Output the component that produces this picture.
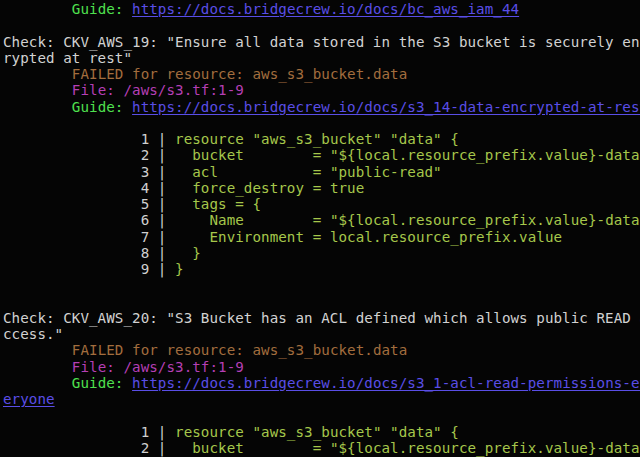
import { ReactNode } from 'react';

// 终端输出：checkov 扫描结果
const CODE = [
  'resource "aws_s3_bucket" "data" {',
  '  bucket        = "${local.resource_prefix.value}-data"',
  '  acl           = "public-read"',
  '  force_destroy = true',
  '  tags = {',
  '    Name        = "${local.resource_prefix.value}-data"',
  '    Environment = local.resource_prefix.value',
  '  }',
  '}',
];

function Line({ children }: { children?: ReactNode }) {
  return <div className="h-[16.26px] whitespace-pre">{children ?? ' '}</div>;
}

function Link({ children }: { children: ReactNode }) {
  return <span className="text-[#5a4ee6] underline underline-offset-[2px]">{children}</span>;
}

function Guide({ url }: { url: string }) {
  return (
    <Line>
      {'        '}
      <span className="text-[#4fe04f]">Guide: </span>
      <Link>{url}</Link>
    </Line>
  );
}

function Failed() {
  return (
    <>
      <Line>
        {'        '}
        <span className="text-[#a26d3e]">FAILED for resource: aws_s3_bucket.data</span>
      </Line>
      <Line>
        {'        '}
        <span className="text-[#b53fb5]">File: /aws/s3.tf:1-9</span>
      </Line>
    </>
  );
}

function CodeLine({ n }: { n: number }) {
  return (
    <Line>
      <span className="text-[#d0d0d0]">{`                ${n} | `}</span>
      <span className="text-[#a6c74b]">{CODE[n - 1]}</span>
    </Line>
  );
}

export default function App() {
  return (
    <div className="w-[640px] h-[457px] overflow-hidden bg-[#050505] pl-[3px] pt-[1px] font-['DejaVu_Sans_Mono','Liberation_Mono',monospace] text-[14.2px] leading-[16.26px] tracking-[0.06px] text-[#d2d2d2]">
      <Guide url="https://docs.bridgecrew.io/docs/bc_aws_iam_44" />
      <Line />
      <Line>Check: CKV_AWS_19: "Ensure all data stored in the S3 bucket is securely enc</Line>
      <Line>rypted at rest"</Line>
      <Failed />
      <Guide url="https://docs.bridgecrew.io/docs/s3_14-data-encrypted-at-rest" />
      <Line />
      {CODE.map((_, i) => (
        <CodeLine key={i} n={i + 1} />
      ))}
      <Line />
      <Line />
      <Line>Check: CKV_AWS_20: "S3 Bucket has an ACL defined which allows public READ a</Line>
      <Line>ccess."</Line>
      <Failed />
      <Guide url="https://docs.bridgecrew.io/docs/s3_1-acl-read-permissions-ev" />
      <Line>
        <Link>eryone</Link>
      </Line>
      <Line />
      <CodeLine n={1} />
      <CodeLine n={2} />
    </div>
  );
}
